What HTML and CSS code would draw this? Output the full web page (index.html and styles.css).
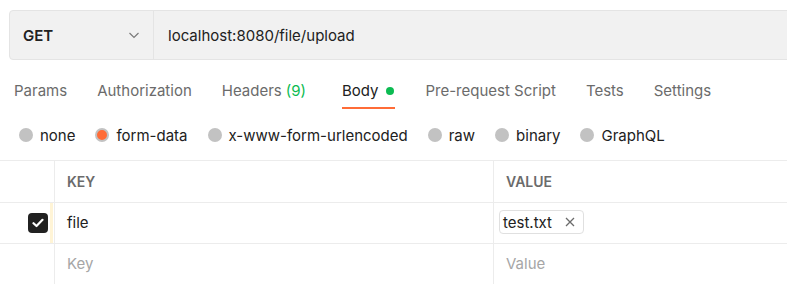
FILE: index.html
```html
<!DOCTYPE html>
<html lang="en">
<head>
  <meta charset="utf-8">
  <title>POST localhost:8080/file/upload</title>
  <link rel="stylesheet" href="styles.css">
</head>
<body>
  <!-- request line -->
  <div class="urlbar">
    <div class="method">
      <span>GET</span>
      <svg class="chevron" width="12" height="12" viewBox="0 0 12 12"><path d="M1.5 4 L6 8.5 L10.5 4" fill="none" stroke="#7a7a7a" stroke-width="1.2"/></svg>
    </div>
    <div class="url">localhost:8080/file/upload</div>
  </div>

  <!-- request tabs -->
  <div class="tabs">
    <div class="tab">Params</div>
    <div class="tab">Authorization</div>
    <div class="tab">Headers <span class="count">(9)</span></div>
    <div class="tab active">Body <span class="dot"></span></div>
    <div class="tab">Pre-request Script</div>
    <div class="tab">Tests</div>
    <div class="tab">Settings</div>
  </div>

  <!-- body type -->
  <div class="modes">
    <label class="mode"><span class="radio"></span>none</label>
    <label class="mode"><span class="radio on"></span>form-data</label>
    <label class="mode"><span class="radio"></span>x-www-form-urlencoded</label>
    <label class="mode"><span class="radio"></span>raw</label>
    <label class="mode"><span class="radio"></span>binary</label>
    <label class="mode"><span class="radio"></span>GraphQL</label>
  </div>

  <!-- form-data table -->
  <div class="kv">
    <div class="cell lead"></div>
    <div class="cell head">KEY</div>
    <div class="cell head">VALUE</div>

    <div class="cell lead">
      <span class="check">
        <svg width="12" height="10" viewBox="0 0 12 10"><path d="M1.5 5.2 L4.5 8 L10.5 1.8" fill="none" stroke="#fff" stroke-width="2.2" stroke-linecap="round" stroke-linejoin="round"/></svg>
      </span>
      <span class="handle"></span>
    </div>
    <div class="cell">file</div>
    <div class="cell">
      <span class="chip">test.txt
        <svg width="10" height="10" viewBox="0 0 10 10"><path d="M1 1 L9 9 M9 1 L1 9" stroke="#6b6b6b" stroke-width="1.3"/></svg>
      </span>
    </div>

    <div class="cell lead"></div>
    <div class="cell placeholder">Key</div>
    <div class="cell placeholder">Value</div>
  </div>
</body>
</html>
```

FILE: styles.css
```css
* { margin: 0; padding: 0; box-sizing: border-box; }
body {
  font-family: Inter, "Noto Sans", sans-serif;
  font-size: 15px;
  color: #212121;
  background: #fff;
  overflow: hidden;
}

/* request line */
.urlbar {
  display: flex;
  height: 50px;
  margin: 10px -20px 0 9px;
  background: #f1f1f1;
  border: 1px solid #e4e4e4;
  border-radius: 4px;
}
.method {
  width: 144px;
  display: flex;
  align-items: center;
  justify-content: space-between;
  padding: 0 13px 0 13px;
  border-right: 1px solid #e4e4e4;
  font-weight: 600;
}
.url {
  display: flex;
  align-items: center;
  padding-left: 14px;
}

/* tabs */
.tabs {
  display: flex;
  padding: 20px 0 0 14px;
  gap: 30px;
}
.tab {
  display: flex;
  align-items: center;
  gap: 8px;
  height: 29px;
  padding-bottom: 6px;
  border-bottom: 2px solid transparent;
  color: #6b6b6b;
  line-height: 20px;
}
.tab .count { color: #0cbb52; margin-left: -4px; margin-right: 6px; }
.tab.active {
  color: #212121;
  border-bottom-color: #ff6c37;
}
.dot {
  width: 8px;
  height: 8px;
  border-radius: 50%;
  background: #0cbb52;
  margin-right: 1px;
}

/* body mode radios */
.modes {
  display: flex;
  align-items: center;
  height: 51px;
  padding: 1px 0 0 19px;
  gap: 20px;
}
.mode {
  display: flex;
  align-items: center;
  gap: 7px;
}
.radio {
  width: 14px;
  height: 14px;
  border-radius: 50%;
  background: #c2c2c2;
}
.radio.on {
  background: #ff6c37;
  border: 2px solid #c2c2c2;
}

/* key / value table */
.kv {
  display: grid;
  grid-template-columns: 54px 439px 1fr;
  grid-template-rows: 42px 41px 41px;
  border-top: 1px solid #ececec;
}
.kv .cell {
  display: flex;
  align-items: center;
  padding: 0 0 2px 12px;
  border-bottom: 1px solid #ececec;
  border-left: 1px solid #ececec;
}
.kv .cell.lead {
  border-left: none;
  padding: 0;
  justify-content: flex-end;
}
.kv .head {
  font-weight: 600;
  color: #6b6b6b;
  font-size: 14px;
  padding-bottom: 0;
}
.check {
  width: 20px;
  height: 20px;
  border-radius: 4px;
  background: #212121;
  display: flex;
  align-items: center;
  justify-content: center;
  margin-right: 2px;
}
.handle {
  width: 3px;
  height: 100%;
  background: #fff4d6;
  margin-right: 1px;
}
.chip {
  display: inline-flex;
  align-items: center;
  gap: 13px;
  height: 24px;
  padding: 0 8px 0 3px;
  margin-left: -7px;
  border: 1px solid #e0e0e0;
  border-radius: 4px;
}
.placeholder { color: #a6a6a6; }
```
